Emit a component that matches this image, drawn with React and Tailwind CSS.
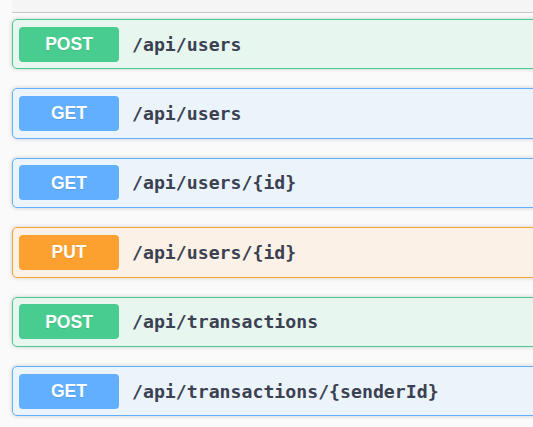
const ops = [
  { method: 'POST', path: '/api/users' },
  { method: 'GET', path: '/api/users' },
  { method: 'GET', path: '/api/users/{id}' },
  { method: 'PUT', path: '/api/users/{id}' },
  { method: 'POST', path: '/api/transactions' },
  { method: 'GET', path: '/api/transactions/{senderId}' },
];

const styles = {
  POST: { box: 'border-[#49cc90] bg-[#e8f6f0]', badge: 'bg-[#49cc90]' },
  GET: { box: 'border-[#61affe] bg-[#ebf3fb]', badge: 'bg-[#61affe]' },
  PUT: { box: 'border-[#fca130] bg-[#fbf1e6]', badge: 'bg-[#fca130]' },
};

function OpBlock({ method, path }) {
  const s = styles[method];
  return (
    <div className={`flex items-center h-[50.4px] mb-[19px] px-[6px] border rounded-[5px] shadow-[0_0_4px_rgba(0,0,0,0.19)] ${s.box}`}>
      <span
        className={`w-[100px] h-[35px] flex items-center justify-center rounded-[4px] text-white font-bold text-[17.5px] ${s.badge}`}
        style={{ fontFamily: '"Liberation Sans", Arial, sans-serif', textShadow: '0 1px 0 rgba(0,0,0,0.1)' }}
      >
        {method}
      </span>
      <span
        className="ml-[13px] text-[18.2px] font-bold text-[#3b4151]"
        style={{ fontFamily: '"DejaVu Sans Mono", monospace' }}
      >
        {path}
      </span>
    </div>
  );
}

export default function App() {
  return (
    <div className="w-[533px] h-[427px] overflow-hidden bg-[#fafafa]">
      <div className="w-[600px] ml-[12px]">
        <div className="h-[13px] border-b border-[#c8c8c8] bg-[#f5f5f5]" />
        <div className="pt-[6px]">
          {ops.map((op, i) => (
            <OpBlock key={i} {...op} />
          ))}
        </div>
      </div>
    </div>
  );
}
